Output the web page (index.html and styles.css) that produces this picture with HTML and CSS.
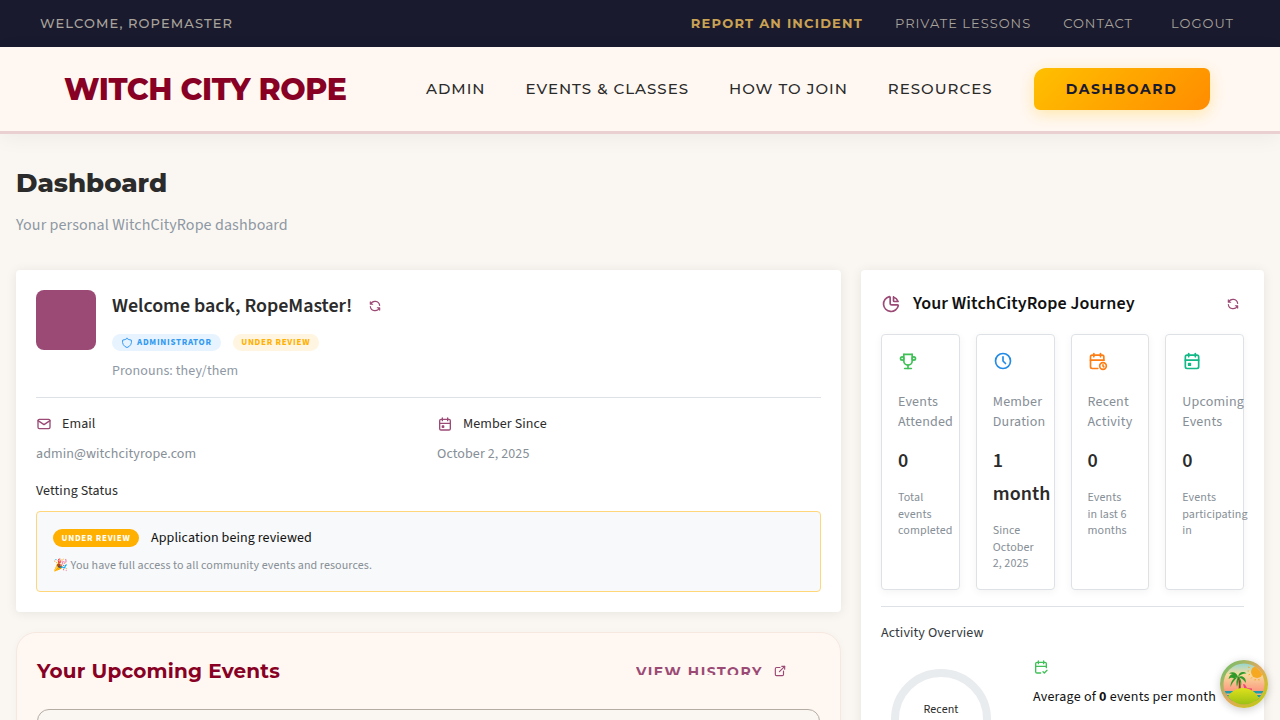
FILE: index.html
```html
<!DOCTYPE html>
<html lang="en">
<head>
<meta charset="utf-8">
<title>Dashboard - Witch City Rope</title>
<link rel="stylesheet" href="styles.css">
</head>
<body>
<svg class="defs" width="0" height="0" aria-hidden="true">
<symbol id="i-refresh" viewBox="0 0 24 24"><path d="M20 11a8.1 8.1 0 0 0 -15.5 -2m-.5 -4v4h4"/><path d="M4 13a8.1 8.1 0 0 0 15.5 2m.5 4v-4h-4"/></symbol>
<symbol id="i-shield" viewBox="0 0 24 24"><path d="M12 3a12 12 0 0 0 8.5 3a12 12 0 0 1 -8.5 15a12 12 0 0 1 -8.5 -15a12 12 0 0 0 8.5 -3"/></symbol>
<symbol id="i-mail" viewBox="0 0 24 24"><path d="M3 7a2 2 0 0 1 2 -2h14a2 2 0 0 1 2 2v10a2 2 0 0 1 -2 2h-14a2 2 0 0 1 -2 -2v-10z"/><path d="M3 7l9 6l9 -6"/></symbol>
<symbol id="i-calendar" viewBox="0 0 24 24"><path d="M4 7a2 2 0 0 1 2 -2h12a2 2 0 0 1 2 2v12a2 2 0 0 1 -2 2h-12a2 2 0 0 1 -2 -2v-12z"/><path d="M16 3v4"/><path d="M8 3v4"/><path d="M4 11h16"/><path d="M8 15h2v2h-2z"/></symbol>
<symbol id="i-trophy" viewBox="0 0 24 24"><path d="M8 21l8 0"/><path d="M12 17l0 4"/><path d="M7 4l10 0"/><path d="M17 4v8a5 5 0 0 1 -10 0v-8"/><path d="M5 9m-2 0a2 2 0 1 0 4 0a2 2 0 1 0 -4 0"/><path d="M19 9m-2 0a2 2 0 1 0 4 0a2 2 0 1 0 -4 0"/></symbol>
<symbol id="i-clock" viewBox="0 0 24 24"><circle cx="12" cy="12" r="9"/><path d="M12 7v5l3 3"/></symbol>
<symbol id="i-caltime" viewBox="0 0 24 24"><path d="M11.795 21h-6.795a2 2 0 0 1 -2 -2v-12a2 2 0 0 1 2 -2h12a2 2 0 0 1 2 2v4"/><path d="M18 18m-4 0a4 4 0 1 0 8 0a4 4 0 1 0 -8 0"/><path d="M15 3v4"/><path d="M7 3v4"/><path d="M3 11h16"/><path d="M18 16.496v1.504l1 1"/></symbol>
<symbol id="i-pie" viewBox="0 0 24 24"><path d="M10 3.2a9 9 0 1 0 10.8 10.8a1 1 0 0 0 -1 -1h-6.8a2 2 0 0 1 -2 -2v-7a.9 .9 0 0 0 -1 -.8"/><path d="M15 3.5a9 9 0 0 1 5.5 5.5h-4.5a1 1 0 0 1 -1 -1v-4.5"/></symbol>
<symbol id="i-ext" viewBox="0 0 24 24"><path d="M12 6h-6a2 2 0 0 0 -2 2v10a2 2 0 0 0 2 2h10a2 2 0 0 0 2 -2v-6"/><path d="M11 13l9 -9"/><path d="M15 4h5v5"/></symbol>
<symbol id="i-calcheck" viewBox="0 0 24 24"><path d="M11.5 21h-5.5a2 2 0 0 1 -2 -2v-12a2 2 0 0 1 2 -2h12a2 2 0 0 1 2 2v6"/><path d="M16 3v4"/><path d="M8 3v4"/><path d="M4 11h16"/><path d="M15 19l2 2l4 -4"/></symbol>
</svg>

<div class="utility-bar">
  <span class="utility-welcome">WELCOME, ROPEMASTER</span>
  <nav class="utility-links">
    <a class="utility-incident">REPORT AN INCIDENT</a>
    <a>PRIVATE LESSONS</a>
    <a>CONTACT</a>
    <a class="utility-logout">LOGOUT</a>
  </nav>
</div>

<header class="main-nav">
  <div class="logo">WITCH CITY ROPE</div>
  <nav class="main-links">
    <a>ADMIN</a>
    <a>EVENTS &amp; CLASSES</a>
    <a>HOW TO JOIN</a>
    <a>RESOURCES</a>
  </nav>
  <button class="cta">DASHBOARD</button>
</header>

<main class="page">
  <h1 class="page-title">Dashboard</h1>
  <p class="page-sub">Your personal WitchCityRope dashboard</p>

  <div class="columns">
    <div class="left-col">
      <section class="card">
        <div class="profile">
          <div class="avatar"></div>
          <div class="profile-info">
            <div class="welcome-row">
              <h2 class="welcome">Welcome back, RopeMaster!</h2>
              <svg class="ico ico-14 plum"><use href="#i-refresh"/></svg>
            </div>
            <div class="badges">
              <span class="badge badge-blue"><svg class="ico ico-12"><use href="#i-shield"/></svg>ADMINISTRATOR</span>
              <span class="badge badge-amber">UNDER REVIEW</span>
            </div>
            <div class="pronouns">Pronouns: they/them</div>
          </div>
        </div>
        <hr class="rule">
        <div class="details">
          <div>
            <div class="detail-label"><svg class="ico ico-16 plum"><use href="#i-mail"/></svg>Email</div>
            <div class="detail-value">admin@witchcityrope.com</div>
          </div>
          <div>
            <div class="detail-label"><svg class="ico ico-16 plum"><use href="#i-calendar"/></svg>Member Since</div>
            <div class="detail-value">October 2, 2025</div>
          </div>
        </div>
        <div class="vet-label">Vetting Status</div>
        <div class="vet-box">
          <div class="vet-row">
            <span class="badge badge-solid">UNDER REVIEW</span>
            <span class="vet-title">Application being reviewed</span>
          </div>
          <div class="vet-note">🎉 You have full access to all community events and resources.</div>
        </div>
      </section>

      <section class="events">
        <div class="events-head">
          <h2 class="events-title">Your Upcoming Events</h2>
          <div class="history">
            <span class="history-clip"><span>VIEW HISTORY</span></span>
            <svg class="ico ico-14 plum"><use href="#i-ext"/></svg>
          </div>
        </div>
        <div class="events-inner"></div>
      </section>
    </div>

    <section class="card journey">
      <div class="journey-head">
        <svg class="ico ico-20 plum"><use href="#i-pie"/></svg>
        <h2 class="journey-title">Your WitchCityRope Journey</h2>
        <svg class="ico ico-14 plum journey-refresh"><use href="#i-refresh"/></svg>
      </div>
      <div class="stats">
        <div class="stat">
          <svg class="ico ico-20 green"><use href="#i-trophy"/></svg>
          <div class="stat-label">Events Attended</div>
          <div class="stat-value">0</div>
          <div class="stat-desc">Total events completed</div>
        </div>
        <div class="stat">
          <svg class="ico ico-20 blue"><use href="#i-clock"/></svg>
          <div class="stat-label">Member Duration</div>
          <div class="stat-value">1 month</div>
          <div class="stat-desc">Since October 2, 2025</div>
        </div>
        <div class="stat">
          <svg class="ico ico-20 orange"><use href="#i-caltime"/></svg>
          <div class="stat-label">Recent Activity</div>
          <div class="stat-value">0</div>
          <div class="stat-desc">Events in last 6 months</div>
        </div>
        <div class="stat">
          <svg class="ico ico-20 teal"><use href="#i-calendar"/></svg>
          <div class="stat-label">Upcoming Events</div>
          <div class="stat-value">0</div>
          <div class="stat-desc">Events participating in</div>
        </div>
      </div>
      <hr class="rule rule-journey">
      <div class="overview-label">Activity Overview</div>
      <div class="overview">
        <div class="ring"><span>Recent</span></div>
        <div class="overview-side">
          <svg class="ico ico-16 green"><use href="#i-calcheck"/></svg>
          <div class="overview-text">Average of <b>0</b> events per month</div>
        </div>
      </div>
    </section>
  </div>
</main>

<div class="fab">
  <svg viewBox="0 0 48 48" width="48" height="48" aria-hidden="true">
    <defs>
      <linearGradient id="fab-ring" x1="0" y1="0" x2="1" y2="1"><stop offset="0" stop-color="#58c46a"/><stop offset=".5" stop-color="#e4a85e"/><stop offset="1" stop-color="#b4d400"/></linearGradient>
      <linearGradient id="fab-sky" x1="0" y1="0" x2="0" y2="1"><stop offset="0" stop-color="#78d4de"/><stop offset=".3" stop-color="#f7dc9e"/><stop offset=".65" stop-color="#fc9a80"/></linearGradient>
      <linearGradient id="fab-hill" x1="0" y1="0" x2="0" y2="1"><stop offset="0" stop-color="#dfe01c"/><stop offset=".6" stop-color="#8fbc12"/><stop offset="1" stop-color="#3f8410"/></linearGradient>
      <clipPath id="fab-clip"><circle cx="24" cy="24" r="20.500"/></clipPath>
    </defs>
    <circle cx="24" cy="24" r="24" fill="url(#fab-ring)"/>
    <g clip-path="url(#fab-clip)">
      <rect width="48" height="48" fill="url(#fab-sky)"/>
      <circle cx="37" cy="12" r="6" fill="#f7a823"/>
      <path d="M28 7l1.500 .5M27.500 11h1.500M28.500 15l1.500-.8M31 18.500l1-1.200M35 20.500l.3-1.500M39 20.500l-.2-1.500" stroke="#f7a823" stroke-width="1" fill="none"/>
      <rect y="31" width="48" height="10" fill="#1e9cab"/>
      <rect y="33.500" width="48" height="1.500" fill="#f4b07e"/>
      <rect y="37" width="48" height="1.200" fill="#7fd0c4"/>
      <path d="M17.500 17c1.500 5 1.600 10 .8 15h2.200c.6-5 .2-10-1.500-15z" fill="#7b4a1e"/>
      <path d="M18 17c-3.500-4.500-8-4-9.500 2 2.500-1.800 4.500-1.600 5.500-.2 1-1.600 2.500-2 4-1.800zM18 17c-1-4.500-5.500-6-9-3.500 3.500 0 6 1.200 9 3.500zM18 17c.5-4.500 5-6.500 8.500-3.500-3.500-.2-6 1-8.500 3.500zM18 17c3.800-2 8-.3 8 6-2.500-3.400-4.800-5-8-6zM18 17c-4 .5-7.500 3.600-7.500 10 1.500-4 3.700-7 7.500-10zM18 17c-1.800 2.700-2 6-1 10 1-3.500 1.500-6.500 1-10zM18 17c2.500 1 3.800 4 3.200 8.500-.8-3.300-1.800-6-3.200-8.500z" fill="#2f9a2a"/>
      <path d="M23 24l2 .5 2 3.500 5 .6v2.400h-7z" fill="#f0457a"/>
      <ellipse cx="23" cy="44" rx="17" ry="16" fill="url(#fab-hill)"/>
    </g>
  </svg>
</div>
</body>
</html>
```

FILE: styles.css
```css
* { box-sizing: border-box; }
html, body { margin: 0; padding: 0; }
body {
  background: #faf7f2;
  color: #2b2b2b;
  font-family: "Source Sans Pro", "Source Sans 3", "Noto Sans", "Liberation Sans", sans-serif;
  font-size: 14px;
  letter-spacing: .09px;
}
.defs { position: absolute; }

.ico { fill: none; stroke: currentColor; stroke-width: 2; stroke-linecap: round; stroke-linejoin: round; flex: none; display: block; }
.ico-12 { width: 12px; height: 12px; }
.ico-14 { width: 14px; height: 14px; }
.ico-16 { width: 16px; height: 16px; }
.ico-20 { width: 20px; height: 20px; }
.plum { color: #9b4a75; }
.green { color: #40c057; }
.blue { color: #228be6; }
.orange { color: #fd7e14; }
.teal { color: #12b886; }

.utility-bar {
  height: 47px;
  background: #1a1a2e;
  padding: 0 40px 2px;
  display: flex;
  align-items: center;
  justify-content: space-between;
  font-family: Montserrat, Inter, "Liberation Sans", sans-serif;
  font-size: 13px;
  letter-spacing: 1px;
  color: #a8a39b;
}
.utility-welcome { font-weight: 500; letter-spacing: 1.1px; }
.utility-links { display: flex; align-items: center; gap: 32px; padding-right: 6px; }
.utility-incident { color: #c9a253; font-weight: 700; letter-spacing: 1.2px; }
.utility-logout { margin-left: 6px; }

.main-nav {
  height: 87px;
  background: #fff8f2;
  border-bottom: 3px solid #ead0d0;
  box-shadow: 0 4px 20px rgba(0, 0, 0, .05);
  display: flex;
  align-items: center;
  padding: 0 70px 0 64px;
  position: relative;
}
.logo {
  font-family: Montserrat, Inter, "Liberation Sans", sans-serif;
  font-weight: 800;
  font-size: 30px;
  letter-spacing: -.4px;
  color: #880124;
  flex: none;
  width: 362px;
  white-space: nowrap;
}
.main-links {
  display: flex;
  flex: none;
  gap: 40px;
  padding-bottom: 2px;
  font-family: Montserrat, Inter, "Liberation Sans", sans-serif;
  font-size: 15px;
  letter-spacing: 1px;
  font-weight: 500;
  color: #2b2b2b;
  white-space: nowrap;
}
.cta {
  margin-left: 41px;
  flex: none;
  width: 176px;
  height: 42px;
  border: 0;
  border-radius: 12px 6px 12px 6px;
  background: linear-gradient(135deg, #ffc000, #ff8c00);
  box-shadow: 0 4px 15px rgba(255, 192, 0, .3);
  font-family: Montserrat, Inter, "Liberation Sans", sans-serif;
  font-weight: 700;
  font-size: 14px;
  letter-spacing: 1.6px;
  color: #1a1a2e;
}

.page { padding: 31px 16px 16px; }
.page-title {
  margin: 0;
  font-family: Montserrat, Inter, "Liberation Sans", sans-serif;
  font-weight: 800;
  font-size: 26px;
  line-height: 36px;
  letter-spacing: 0;
  color: #2b2b2b;
}
.page-sub { margin: 12px 0 0; font-size: 16px; line-height: 24px; color: #8e98a4; letter-spacing: .1px; }

.columns { display: grid; grid-template-columns: 825px 403px; gap: 20px; margin-top: 33px; align-items: start; }
.left-col { display: flex; flex-direction: column; gap: 20px; }
.card { background: #fff; border-radius: 4px; box-shadow: 0 1px 12px rgba(0, 0, 0, .08); padding: 20px; }

.profile { display: flex; gap: 16px; }
.avatar { width: 60px; height: 60px; border-radius: 8px; background: #9b4a75; flex: none; }
.welcome-row { display: flex; align-items: center; gap: 16px; height: 30px; margin-top: 1px; }
.welcome { margin: 0; font-size: 20px; font-weight: 600; color: #2b2b2b; line-height: 30px; letter-spacing: -.04px; }
.badges { display: flex; gap: 12px; margin-top: 13px; }
.badge {
  display: inline-flex;
  align-items: center;
  gap: 4px;
  height: 17px;
  padding: 0 9px;
  border-radius: 9px;
  font-size: 9px;
  font-weight: 700;
  letter-spacing: .72px;
  white-space: nowrap;
}
.badge-blue { background: #e7f3ff; color: #339af0; }
.badge-amber { background: #fff5e0; color: #ffb000; padding: 0 8.500px; }
.badge-solid { background: #ffb000; color: #fff; height: 18px; padding: 0 8.500px; }
.pronouns { margin-top: 10px; font-size: 14px; line-height: 20px; color: #8e98a4; }

.rule { border: 0; border-top: 1px solid #dee2e6; margin: 16px 0 0; }
.details { display: grid; grid-template-columns: 1fr 1fr; gap: 17px; margin-top: 16px; }
.detail-label { display: flex; align-items: center; gap: 10px; font-size: 14px; line-height: 20px; color: #2b2b2b; }
.detail-value { margin-top: 10px; font-size: 14px; line-height: 20px; color: #868e96; }
.vet-label { margin-top: 17px; font-size: 14px; line-height: 20px; color: #2b2b2b; }
.vet-box {
  margin-top: 10px;
  height: 81px;
  padding: 17px 16px;
  background: #f8f9fa;
  border: 1px solid #ffd77a;
  border-radius: 4px;
}
.vet-row { display: flex; align-items: center; gap: 12px; height: 18px; }
.vet-title { font-size: 14px; line-height: 18px; color: #111; }
.vet-note { margin-top: 10px; font-size: 12px; line-height: 18px; color: #868e96; }

.events {
  background: #fff8f2;
  border: 1px solid #f6e8df;
  border-radius: 20px;
  padding: 20px 20px 24px;
  box-shadow: 0 1px 8px rgba(0, 0, 0, .03);
}
.events-head { display: flex; align-items: center; justify-content: space-between; height: 36px; padding-right: 33px; }
.events-title {
  margin: 0;
  font-family: Montserrat, Inter, "Liberation Sans", sans-serif;
  font-weight: 700;
  font-size: 20px;
  letter-spacing: .2px;
  color: #880124;
}
.history { display: flex; align-items: center; gap: 10px; }
.history-clip {
  display: block;
  height: 8px;
  overflow: hidden;
  font-family: Montserrat, Inter, "Liberation Sans", sans-serif;
  font-weight: 700;
  font-size: 14px;
  letter-spacing: 1.5px;
  color: #9b4a75;
  white-space: nowrap;
}
.history-clip span { display: block; line-height: 10px; }
.events-inner { margin-top: 20px; height: 120px; background: #faf7f2; border: 1px solid #b5aca3; border-radius: 12px; }

.journey { min-height: 520px; }
.journey-head { display: flex; align-items: center; gap: 12px; height: 27px; }
.journey-title { margin: 0; font-size: 18px; font-weight: 600; color: #111; flex: 1; }
.journey-refresh { margin-right: 4px; }
.stats { display: grid; grid-template-columns: repeat(4, minmax(0, 1fr)); gap: 16px; margin-top: 17px; }
.stat {
  height: 256px;
  padding: 16px;
  background: #fff;
  border: 1px solid #dee2e6;
  border-radius: 4px;
  box-shadow: 0 2px 8px rgba(0, 0, 0, .05);
}
.stat-label { margin-top: 21px; font-size: 14px; line-height: 20px; color: #868e96; letter-spacing: .2px; }
.stat-value { margin-top: 13px; font-size: 20px; font-weight: 600; line-height: 33px; color: #2b2b2b; }
.stat-desc { margin-top: 12px; font-size: 12px; line-height: 16.500px; color: #868e96; }
.rule-journey { margin-top: 16px; }
.overview-label { margin-top: 16px; font-size: 14px; line-height: 20px; color: #343a40; }
.overview { display: flex; margin-top: 16px; }
.ring {
  width: 100px;
  height: 100px;
  margin: 10px 0 0 10px;
  padding-bottom: 20px;
  border: 8px solid #e9ecef;
  border-radius: 50%;
  display: flex;
  align-items: center;
  justify-content: center;
  flex: none;
  font-size: 12px;
  color: #2b2b2b;
}
.overview-side { margin-left: 42px; }
.overview-text { margin-top: 12px; font-size: 14px; line-height: 20px; color: #111; letter-spacing: .22px; }

.fab { position: fixed; right: 12px; bottom: 12px; width: 48px; height: 48px; border-radius: 50%; box-shadow: 0 2px 8px rgba(0, 0, 0, .2); }
.fab svg { display: block; }
```
